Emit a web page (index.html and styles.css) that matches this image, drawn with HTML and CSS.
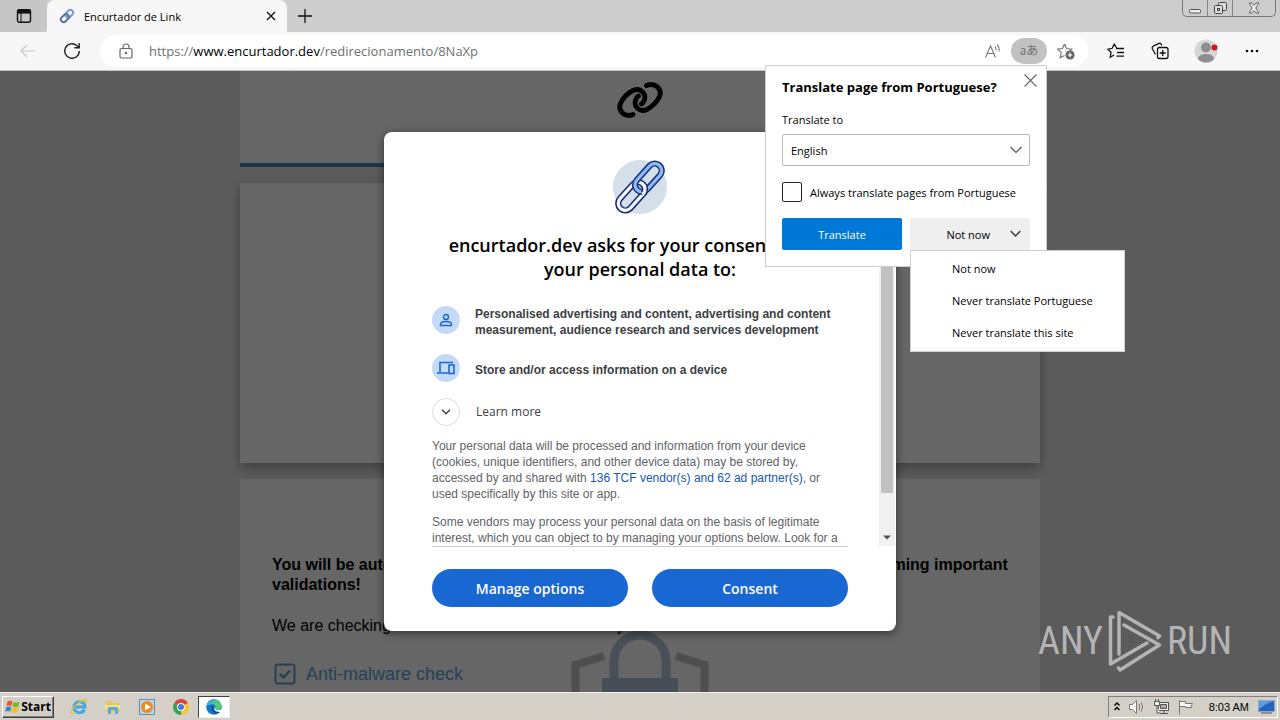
FILE: index.html
```html
<!DOCTYPE html>
<html lang="en">
<head>
<meta charset="utf-8">
<title>Encurtador de Link</title>
<link rel="stylesheet" href="styles.css">
</head>
<body>
<header class="tabstrip">
  <button class="tab-actions" aria-label="Tab actions">
    <svg width="16" height="16" viewBox="0 0 16 16" fill="none" stroke="#111" stroke-width="1.4"><rect x="1.5" y="1.7" width="13" height="12.6" rx="2"/><path d="M1.5 3.6h13" stroke-width="4"/><path d="M5 5v9" stroke-width="1"/></svg>
  </button>
  <div class="tab">
    <svg width="16" height="16" viewBox="0 0 16 16" fill="none"><g transform="rotate(-45 8 8)"><rect x="7" y="5.2" width="8.5" height="5.6" rx="2.8" stroke="#7f9bcf" stroke-width="2"/><rect x=".5" y="5.2" width="9" height="5.6" rx="2.8" stroke="#5773ae" stroke-width="2"/></g></svg>
    <span class="tab-title">Encurtador de Link</span>
    <button class="tab-close" aria-label="Close tab"><svg width="10" height="10" viewBox="0 0 10 10" stroke="#111" stroke-width="1.4"><path d="M1 1l8 8M9 1l-8 8"/></svg></button>
  </div>
  <button class="new-tab" aria-label="New tab"><svg width="16" height="16" viewBox="0 0 16 16" stroke="#111" stroke-width="1.3"><path d="M8 1v14M1 8h14"/></svg></button>
  <div class="window-buttons">
    <button class="win-min" aria-label="Minimize"><svg width="12" height="14" viewBox="0 0 12 14" fill="#eee" stroke="#555"><rect x=".5" y="8.5" width="11" height="3.5" rx="1"/></svg></button>
    <button class="win-max" aria-label="Restore"><svg width="13" height="14" viewBox="0 0 13 14" fill="#ddd" stroke="#444"><rect x="4.5" y="1.5" width="8" height="8" rx="1"/><rect x=".5" y="4.5" width="8" height="8" rx="1"/><rect x="3.5" y="7.5" width="2" height="2"/></svg></button>
    <button class="win-close" aria-label="Close"><svg width="12" height="12" viewBox="0 0 12 12" fill="#eee" stroke="#555" stroke-width=".9"><path d="M1 1h3l2 2.500 2-2.500h3L7.700 6 11 11H8L6 8.500 4 11H1l3.300-5z"/></svg></button>
  </div>
</header>

<nav class="toolbar">
  <button class="tool" aria-label="Back"><svg width="16" height="14" viewBox="0 0 16 14" fill="none" stroke="#c8c8c8" stroke-width="1.2"><path d="M15.500 7H1M7 1L1 7l6 6"/></svg></button>
  <button class="tool" aria-label="Refresh"><svg width="18" height="18" viewBox="0 0 18 18" fill="none" stroke="#222" stroke-width="1.4"><path d="M16.300 9A7.300 7.300 0 1 1 13.800 3.500L16 5.600M16.200 1v4.800h-4.800"/></svg></button>
  <div class="address">
    <svg width="14" height="16" viewBox="0 0 14 16" fill="none" stroke="#666" stroke-width="1.2"><rect x="1" y="5.5" width="12" height="9.5" rx="1.5"/><path d="M4 5.500V4a3 3 0 0 1 6 0v1.500"/><circle cx="7" cy="10" r=".7" fill="#666"/></svg>
    <a class="url" href="#">https://<b>www.encurtador.dev</b>/redirecionamento/8NaXp</a>
    <button class="read" aria-label="Read aloud"><svg width="18" height="16" viewBox="0 0 18 16" fill="none" stroke="#777" stroke-width="1.1"><path d="M1.500 14.500L6.500 3l5 11.500M3.300 10.500h6.400M11 3.500q1.500 1.500 1 4M13 1.500q3 3 1.800 7"/></svg></button>
    <button class="translate-chip" aria-label="Translate"><span>aあ</span></button>
    <button class="add-favorite" aria-label="Add favorite"><svg width="18" height="17" viewBox="0 0 18 17" fill="none" stroke="#777" stroke-width="1.2"><path d="M7.500 1l2 4.500 5.200.600-2 2.200M7.500 1l-2 4.500-4.800.600 3.500 3.500-1 5L7.500 12.500"/><circle cx="13" cy="12" r="4" fill="#666" stroke="#666"/><path d="M13 9.800v4.400M10.800 12h4.400" stroke="#fff"/></svg></button>
  </div>
  <button class="tool" aria-label="Favorites"><svg width="18" height="16" viewBox="0 0 18 16" fill="none" stroke="#111" stroke-width="1.3"><path d="M9.500 4.700L7.200 1.200 5.200 5.300.900 6.200 4 9.300l-.700 4.900L7 12M9 5.500h8M10 9.500h7M9.500 13.200H17"/></svg></button>
  <button class="tool" aria-label="Collections"><svg width="18" height="18" viewBox="0 0 18 18" fill="none" stroke="#111" stroke-width="1.3"><rect x="6.5" y="5.5" width="10.5" height="11" rx="2"/><path d="M11.700 8v6M8.700 11h6M4.500 12.500L1.300 6.500Q.700 5 2.200 4.200L8 1.300q1.500-.500 2.200.900l.600 1.300"/></svg></button>
  <button class="tool profile" aria-label="Profile"><svg width="24" height="24" viewBox="0 0 24 24"><clipPath id="face"><circle cx="12" cy="12" r="11.5"/></clipPath><circle cx="12" cy="12" r="11.5" fill="#d6d6d4"/><g clip-path="url(#face)" fill="#8e8e8e"><circle cx="12" cy="8.5" r="5"/><ellipse cx="12" cy="19.5" rx="8" ry="4.5"/></g><circle cx="20.5" cy="8.5" r="3" fill="#d8111b"/></svg></button>
  <button class="tool" aria-label="Settings and more"><svg width="14" height="4" viewBox="0 0 14 4"><circle cx="2" cy="2" r="1.3"/><circle cx="7" cy="2" r="1.3"/><circle cx="12" cy="2" r="1.3"/></svg></button>
</nav>

<main class="viewport">
  <div class="page">
    <section class="card brand">
      <svg width="48" height="38" viewBox="0 0 48 38" fill="none" stroke="#000" stroke-width="4.8" stroke-linecap="round"><path d="M17 33.500C9 37 1.500 30 4.500 22.500C7 17 12 12 17 9.500C25 6 31 13 28 20Q27.500 22 25.500 23"/><path d="M30.500 4.500C39 1 46.500 8 43.500 15.500C41 21 37 25 31 28.500C23 32 17 25 20 18Q20.500 16 22.500 15"/></svg>
    </section>
    <section class="card advert"></section>
    <section class="card checks">
      <h2>You will be automatically redirected to your destination in 10 seconds after performing important<br>validations!</h2>
      <p>We are checking the link and contents for security</p>
      <div class="check-row">
        <svg width="22" height="22" viewBox="0 0 22 22" fill="none" stroke="#5f9fd9" stroke-width="2"><rect x="1.5" y="1.5" width="19" height="19" rx="2"/><path d="M6 11l3.500 3.500L16 7.500" stroke-width="2.5"/></svg>
        <span>Anti-malware check</span>
      </div>
      <svg class="shield" width="138" height="90" viewBox="0 0 138 90" fill="none"><path d="M33 25L4.500 34V90M105 25l28.500 9V90" stroke="#c2c2c2" stroke-width="8"/><path d="M43 52V30a26 26 0 0 1 52 0V52" stroke="#b7c9dc" stroke-width="9"/><rect x="31" y="47" width="76" height="60" fill="#adc3da"/></svg>
    </section>
  </div>

  <div class="backdrop">
    <div class="consent" role="dialog" aria-labelledby="consent-title">
      <div class="consent-scroll">
        <div class="consent-body">
          <svg class="logo" width="56" height="56" viewBox="0 0 56 56" fill="none"><circle cx="28" cy="28" r="27" fill="#d4dfe9"/><g transform="rotate(-48 28 28)"><rect x="-1" y="21" width="33" height="14" rx="7" stroke="#1b2f78" stroke-width="6.4"/><rect x="-1" y="21" width="33" height="14" rx="7" stroke="#f4f8fc" stroke-width="3.2"/><rect x="24" y="21" width="33" height="14" rx="7" stroke="#17337f" stroke-width="6.4"/><rect x="24" y="21" width="33" height="14" rx="7" stroke="#91b9f4" stroke-width="3.2"/><path d="M25 35a7 7 0 0 0 7-7" stroke="#1b2f78" stroke-width="6.4"/><path d="M24 35h1a7 7 0 0 0 7-8" stroke="#f4f8fc" stroke-width="3.2"/></g></svg>
          <h1 id="consent-title">encurtador.dev asks for your consent to use<br>your personal data to:</h1>
          <ul class="purposes">
            <li>
              <span class="disc"><svg width="14" height="14" viewBox="0 0 14 14" fill="none" stroke="#1967d2" stroke-width="1.4"><circle cx="7" cy="4" r="2.5"/><path d="M1.500 12.500v-1.300Q2 8.500 7 8.500t5.500 2.700v1.300z"/></svg></span>
              <span class="purpose-text">Personalised advertising and content, advertising and content<br>measurement, audience research and services development</span>
            </li>
            <li>
              <span class="disc"><svg width="20" height="14" viewBox="0 0 20 14" fill="none" stroke="#1967d2" stroke-width="1.6"><path d="M17 1.500H4V11M1 12h11"/><rect x="13" y="4" width="5" height="8.5"/></svg></span>
              <span class="purpose-text">Store and/or access information on a device</span>
            </li>
          </ul>
          <button class="learn"><span class="disc outline"><svg width="10" height="6" viewBox="0 0 10 6" fill="none" stroke="#444" stroke-width="1.6"><path d="M1 .700l4 4 4-4"/></svg></span>Learn more</button>
          <p>Your personal data will be processed and information from your device<br>(cookies, unique identifiers, and other device data) may be stored by,<br>accessed by and shared with <a href="#">136 TCF vendor(s) and 62 ad partner(s)</a>, or<br>used specifically by this site or app.</p>
          <p>Some vendors may process your personal data on the basis of legitimate<br>interest, which you can object to by managing your options below. Look for a</p>
        </div>
        <div class="scrollbar"><div class="thumb"></div><svg width="16" height="17" viewBox="0 0 16 17"><path d="M4 6.500h8l-4 4z" fill="#505050"/></svg></div>
      </div>
      <div class="consent-actions">
        <button>Manage options</button>
        <button>Consent</button>
      </div>
    </div>
  </div>

  <div class="watermark"><span>ANY</span>
    <svg width="54" height="62" viewBox="0 0 54 62" fill="none" stroke="#b4b4b4" stroke-width="3.5" stroke-linejoin="round" stroke-linecap="round"><path d="M11 44V2.500L51.500 26l-1.500 1.500M16 15l35.500 20L12 60l-1.500-2M5 7H2.500V54L39 33"/></svg>
    <span>RUN</span></div>
</main>

<section class="popup" aria-label="Translate page">
  <button class="popup-close" aria-label="Close"><svg width="13" height="13" viewBox="0 0 13 13" stroke="#666" stroke-width="1.1"><path d="M.500.500l12 12M12.500.500l-12 12"/></svg></button>
  <h2>Translate page from Portuguese?</h2>
  <label class="to-label" for="lang">Translate to</label>
  <div class="select-wrap">
    <select id="lang"><option>English</option></select>
    <svg width="12" height="8" viewBox="0 0 12 8" fill="none" stroke="#555" stroke-width="1.2"><path d="M.500 1L6 6.500 11.500 1"/></svg>
  </div>
  <label class="always"><input type="checkbox">Always translate pages from Portuguese</label>
  <div class="popup-actions">
    <button class="primary">Translate</button>
    <button class="secondary">Not now<svg width="11" height="8" viewBox="0 0 11 8" fill="none" stroke="#333" stroke-width="1.3"><path d="M.700 1L5.500 6 10.300 1"/></svg></button>
  </div>
  <div class="menu" role="menu">
    <button role="menuitem">Not now</button>
    <button role="menuitem">Never translate Portuguese</button>
    <button role="menuitem">Never translate this site</button>
  </div>
</section>

<footer class="taskbar">
  <button class="start"><svg width="15" height="14" viewBox="0 0 15 14"><path d="M2.500 1.500Q5 0 7.500 1.500L6.500 6Q4 4.800 1.500 6z" fill="#e8562b"/><path d="M8.500 2Q11 3.200 14.500 2L13.500 6.500Q10.500 7.800 7.500 6.500z" fill="#79b82c"/><path d="M1.300 7Q4 5.800 6.300 7L5.300 11.500Q3 10.300.300 11.500z" fill="#3a82d0"/><path d="M7.300 7.500Q10 8.800 13.200 7.500L12.200 12Q9.500 13.500 6.300 12z" fill="#f4bd20"/></svg>Start</button>
  <div class="launchers">
    <button aria-label="Internet Explorer"><svg width="18" height="18" viewBox="0 0 18 18" fill="none"><path d="M14.500 11.500A5.500 5.500 0 1 1 15 9H5" stroke="#3fa9e6" stroke-width="3"/><path d="M3.500 15.500C-2 17 3 8.500 9 4.500S18 1 15.500 6" stroke="#e8b93c" stroke-width="1.3"/></svg></button>
    <button aria-label="Explorer"><svg width="18" height="16" viewBox="0 0 18 16"><path d="M2 2h6l1 2h7v9H2z" fill="#e5c860"/><path d="M1 6h15v4H1z" fill="#f5e08c"/><path d="M4 15V9q0-1 1-1h8q1 0 1 1v6h-3v-4H7v4z" fill="#5aabd6"/></svg></button>
    <button aria-label="Media Player"><svg width="16" height="16" viewBox="0 0 16 16"><rect x=".5" y=".5" width="15" height="15" fill="#b7d5ed" stroke="#5c91bd"/><circle cx="8" cy="8" r="6" fill="#f28a16"/><path d="M6 4.500L12 8l-6 3.500z" fill="#fff"/></svg></button>
    <button aria-label="Chrome"><svg width="16" height="16" viewBox="0 0 16 16"><path d="M8 8L1.100 4A8 8 0 0 1 15 4z" fill="#df4534"/><path d="M8 8l7-4A8 8 0 0 1 8 16z" fill="#f7c52b"/><path d="M8 8v8A8 8 0 0 1 1.100 4z" fill="#34a353"/><circle cx="8" cy="8" r="3.9" fill="#fff"/><circle cx="8" cy="8" r="3" fill="#3e7de0"/></svg></button>
    <button class="active" aria-label="Edge"><svg width="16" height="16" viewBox="0 0 16 16"><circle cx="8" cy="8" r="7.8" fill="#1676cc"/><path d="M.300 8A7.800 7.800 0 0 1 15.800 8Q15.500 11 11 11 9 10.500 10 9 10 5.500 6 5.200 2 5.200.300 8z" fill="#36bfc4"/><path d="M9 1Q15 2 15.700 8q-.500 3-4.700 3-2-.500-1-2Q10 6 8 5.500z" fill="#55cc72"/><path d="M6 7Q3.500 12 9 14.500 13 15 15 11.500 10 13.500 8.500 11 7.500 9 8.500 7.500z" fill="#144f9c"/><path d="M9.500 8Q8.500 11 11.500 11.300 14 11.500 15.800 10L16 13H13Q8 12.500 8 9z" fill="#fff"/></svg></button>
  </div>
  <div class="tray">
    <svg width="8" height="12" viewBox="0 0 8 12" fill="none" stroke="#000" stroke-width="1.4"><path d="M1.500 4.500L4 2l2.500 2.500M1.500 9L4 6.500 6.500 9"/></svg>
    <svg width="18" height="16" viewBox="0 0 18 16" fill="#f8f8f8" stroke="#777"><path d="M1.500 5.500h3L8.500 1.500v13l-4-4h-3z"/><path d="M11 5q1.500 3 0 6M13.300 3.500q2.500 4.500 0 9" fill="none"/></svg>
    <svg width="17" height="16" viewBox="0 0 17 16" fill="#eee" stroke="#555"><rect x="5.5" y="3.5" width="10" height="8"/><path d="M7 14.500h8M11 12v2M1.500 2.500h5v4h-5zM2.500 0v2M5.500 0v2M4 7v7h3" fill="#f5f5f5"/><path d="M7.500 5.500h6v4h-6z" fill="#aaa"/></svg>
    <svg width="17" height="16" viewBox="0 0 17 16" fill="#fafafa" stroke="#777"><path d="M2.500 15.500V1.500M2.500 2.500h6v2h7l-2 4 1 0H8.500v-1h-6z"/></svg>
    <time>8:03 AM</time>
    <svg width="17" height="14" viewBox="0 0 17 14"><rect x=".5" y=".5" width="16" height="11" fill="#2464be" stroke="#8fa8c5"/><path d="M1 1h15Q8 3 1 9z" fill="#5b9de4"/><path d="M3 13h11" stroke="#456"/></svg>
  </div>
</footer>
</body>
</html>
```

FILE: styles.css
```css
* { box-sizing: border-box; }
body {
  margin: 0;
  height: 100vh;
  display: flex;
  flex-direction: column;
  overflow: hidden;
  position: relative;
  font-family: "Open Sans", "Noto Sans", "Noto Sans CJK JP", sans-serif;
  font-size: 12px;
  color: #000;
}
button { border: 0; padding: 0; background: none; font: inherit; color: inherit; display: flex; align-items: center; justify-content: center; }
svg { display: block; flex: none; }
h1, h2, p, ul { margin: 0; padding: 0; }

.tabstrip { height: 32px; flex: none; display: flex; align-items: stretch; background: #cdcdcd; }
.tab-actions { width: 47px; border-radius: 0 0 8px 0; background: #c6c6c6; }
.tab { width: 240px; display: flex; align-items: center; padding: 0 10px 0 12px; gap: 9px; background: #f7f7f7; border-radius: 8px 8px 0 0; }
.tab-title { flex: 1; font-size: 11px; }
.tab-close { width: 12px; height: 16px; }
.new-tab { width: 35px; }
.window-buttons { margin-left: auto; margin-right: 4px; height: 17px; display: flex; border: 1px solid #777; border-top: 0; border-radius: 0 0 5px 5px; }
.window-buttons button { width: 25px; border-right: 1px solid #888; }
.window-buttons .win-close { width: 42px; border: 0; }

.toolbar { height: 39px; flex: none; display: flex; align-items: center; padding: 0 6px; background: #f7f7f7; border-bottom: 1px solid #c4c4c4; }
.tool { width: 44px; height: 32px; }
.profile { width: 48px; }
.address { flex: 1; height: 32px; margin: 0 6px; padding: 0 12px 0 19px; display: flex; align-items: center; border-radius: 16px; background: #fff; }
.url { flex: 1; margin-left: 16px; color: #707070; font-size: 13px; text-decoration: none; }
.url b { font-weight: 400; color: #000; }
.read { width: 36px; height: 26px; }
.translate-chip { width: 36px; height: 26px; border-radius: 13px; background: #c2c2c2; color: #707070; font-size: 12px; line-height: 16px; }
.add-favorite { width: 29px; height: 26px; padding-left: 9px; }

.viewport { flex: 1; min-height: 0; position: relative; overflow: hidden; background: #e4e4e4; }
.page { max-width: 800px; margin: 0 auto; display: flex; flex-direction: column; gap: 16px; font-family: "Liberation Sans", Arial, sans-serif; font-size: 16px; }
.card { background: #fff; box-shadow: 0 5px 12px rgba(0, 0, 0, .3); }
.brand { height: 96px; padding-top: 10px; display: flex; justify-content: center; border-bottom: 4px solid #4189c7; box-shadow: none; }
.advert { height: 280px; }
.checks { position: relative; height: 400px; padding: 76px 32px 0; box-shadow: none; }
.checks h2 { font-size: 16px; line-height: 20px; white-space: nowrap; }
.checks p { margin-top: 20px; line-height: 22px; }
.check-row { margin-top: 26px; padding-left: 2px; display: flex; align-items: center; gap: 10px; color: #5f9fd9; font-size: 18px; line-height: 22px; }
.shield { position: absolute; left: 50%; top: 152px; margin-left: -69px; }

.backdrop { position: absolute; inset: 0; display: flex; align-items: center; justify-content: center; background: rgba(0, 0, 0, .6); }
.consent { width: 512px; border-radius: 8px; background: #fff; overflow: hidden; box-shadow: 0 2px 8px rgba(0, 0, 0, .5); }
.consent-scroll { height: 414px; display: flex; border-right: 1px solid #fff; }
.consent-body { flex: 1; overflow: hidden; padding: 27px 31px 0 0; margin-left: 48px; color: #5f6368; font-family: "Liberation Sans", Arial, sans-serif; line-height: 16px; }
.logo { margin: 0 auto; overflow: visible; }
.consent-body h1 { margin-top: 18px; text-align: center; white-space: nowrap; color: #000; font-family: "Open Sans", "Noto Sans", sans-serif; font-size: 18px; font-weight: 600; line-height: 24px; }
.purposes { list-style: none; margin-top: 21px; display: flex; flex-direction: column; gap: 12px; color: #3c4043; font-weight: 700; }
.purposes li { display: flex; align-items: center; gap: 15px; min-height: 36px; }
.disc { width: 28px; height: 28px; flex: none; display: flex; align-items: center; justify-content: center; border-radius: 50%; background: #c5daf7; }
.outline { background: #fff; border: 1px solid #dadce0; }
.purpose-text { padding-top: 4px; white-space: nowrap; }
.learn { margin-top: 12px; gap: 16px; color: #3c4043; font-family: "Open Sans", "Noto Sans", sans-serif; font-weight: 500; }
.consent-body p { margin-top: 12px; white-space: nowrap; }
.consent-body a { color: #1558b0; text-decoration: none; }
.scrollbar { width: 16px; display: flex; flex-direction: column; justify-content: space-between; background: #f1f1f1; }
.thumb { height: 361px; margin: 0 2px; background: #c1c1c1; }
.consent-actions { margin: 0 48px; padding: 22px 0 24px; display: grid; grid-template-columns: 1fr 1fr; gap: 24px; border-top: 1px solid #ccc; }
.consent-actions button { height: 38px; border-radius: 19px; background: #1967d2; color: #fff; font-size: 14px; font-weight: 600; }

.watermark { position: absolute; right: 48px; bottom: 20px; display: flex; align-items: center; gap: 5px; color: #b4b4b4; font-family: "Roboto Condensed", "Liberation Sans Narrow", Roboto, sans-serif; font-size: 38px; line-height: 62px; }

.popup { position: absolute; top: 65px; right: 233px; width: 282px; height: 202px; padding: 10px 16px 16px; background: #fff; border: 1px solid #cfcfcf; font-size: 11px; }
.popup-close { position: absolute; right: 9px; top: 7px; width: 14px; height: 14px; }
.popup h2 { font-size: 13px; line-height: 22px; font-weight: 700; white-space: nowrap; }
.to-label { display: block; margin-top: 13px; line-height: 18px; }
.select-wrap { position: relative; margin-top: 5px; }
.select-wrap svg { position: absolute; right: 8px; top: 12px; pointer-events: none; }
select { display: block; width: 100%; height: 32px; padding: 0 8px; appearance: none; border: 1px solid #b8b8b8; border-radius: 2px; background: #fff; color: #000; font: inherit; }
.always { display: flex; align-items: center; gap: 8px; margin-top: 16px; height: 20px; white-space: nowrap; }
.always input { appearance: none; width: 20px; height: 20px; margin: 0; flex: none; border: 1px solid #222; border-radius: 2px; }
.popup-actions { display: grid; grid-template-columns: 1fr 1fr; gap: 8px; margin-top: 16px; }
.popup-actions button { height: 32px; border-radius: 2px; }
.primary { background: #0078d7; color: #fff; }
.secondary { background: #efefef; justify-content: flex-end; gap: 20px; padding-right: 9px; }
.menu { position: absolute; left: 144px; top: 184px; width: 215px; padding: 1px 0 3px; background: #fff; border: 1px solid #d0d0d0; }
.menu button { width: 100%; height: 32px; padding-left: 41px; justify-content: flex-start; }

.taskbar { height: 28px; flex: none; display: flex; align-items: center; padding: 0 2px; background: #d4d0c8; border-top: 1px solid #f4f2ee; font-size: 11px; }
.start { width: 52px; height: 22px; gap: 1px; background: #d4d0c8; border: 1px solid; border-color: #fff #404040 #404040 #fff; box-shadow: inset -1px -1px #808080; font-size: 12px; font-weight: 700; }
.launchers { display: flex; margin-left: 8px; }
.launchers button { width: 34px; height: 22px; }
.launchers .active { width: 32px; background: #fff; border: 1px solid #404040; border-right-color: #eee; border-bottom-color: #eee; }
.tray { margin-left: auto; height: 22px; display: flex; align-items: center; gap: 7px; padding: 0 2px 0 4px; border: 1px solid; border-color: #808080 #fff #fff #808080; }
.tray time { margin: 0 2px 0 8px; font-family: "Liberation Sans", sans-serif; font-size: 11px; white-space: nowrap; }
```
